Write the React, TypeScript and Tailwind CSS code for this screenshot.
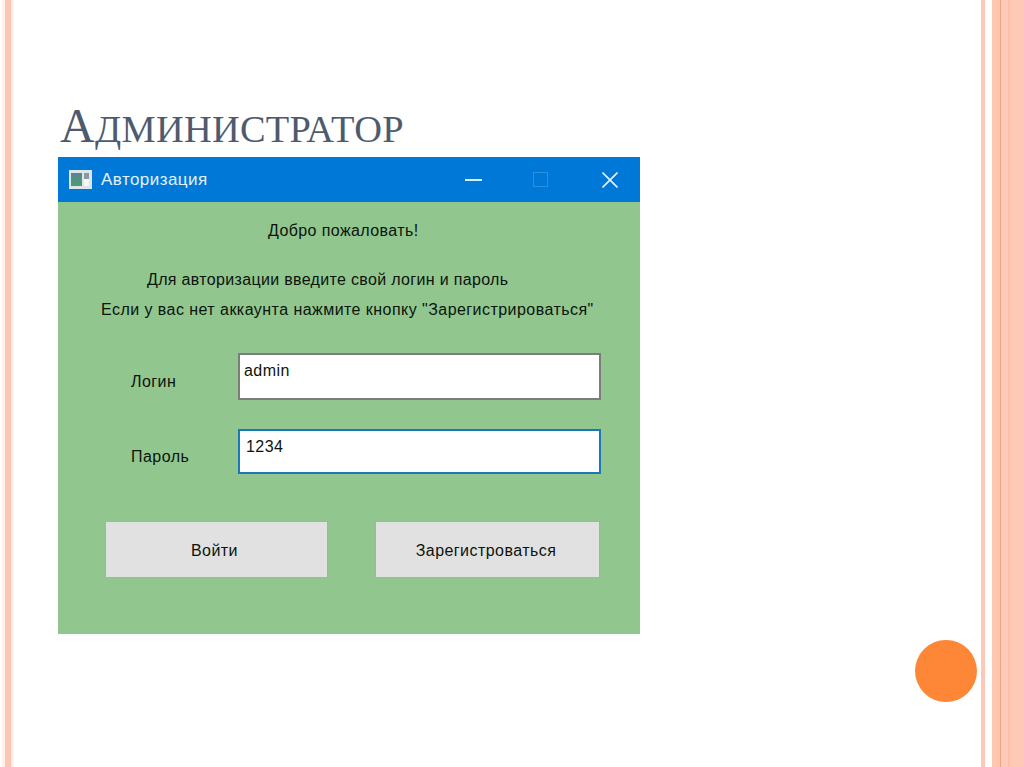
export default function App() {
  return (
    <div className="relative flex h-[767px] w-[1024px] overflow-hidden bg-white font-['Liberation_Sans',sans-serif]">
      {/* Left stripes */}
      <div className="flex w-[58px] shrink-0">
        <div className="ml-[2px] flex h-full w-[12px] justify-center bg-[#fdf1ec]">
          <div className="h-full w-[6px] bg-[#fec5b2]" />
        </div>
      </div>

      {/* Slide */}
      <div className="w-[582px] shrink-0">
        <h1 className="mt-[99px] ml-[2px] h-[58px] font-['Liberation_Serif',serif] text-[38.4px] leading-[54px] tracking-[0.3px] whitespace-nowrap text-[#4e5b6f] uppercase">
          <span className="text-[48px]">А</span>дминистратор
        </h1>

        {/* Login window */}
        <div className="flex h-[477px] flex-col bg-[#91c68f] text-[16px] tracking-[0.45px] text-[#0c140c]">
          <div className="flex h-[45px] shrink-0 items-center bg-[#0078d7] text-[#e4f1fb]">
            <svg width="23" height="19" viewBox="0 0 23 19" className="ml-[11px]">
              <defs>
                <linearGradient id="pane" x1="0" y1="0" x2="0" y2="1">
                  <stop offset="0" stopColor="#5f8296" />
                  <stop offset="1" stopColor="#47a06c" />
                </linearGradient>
              </defs>
              <rect width="23" height="19" fill="#dfe6ea" />
              <rect x="2" y="3" width="11" height="13" fill="url(#pane)" />
              <rect x="15" y="3" width="5" height="6" fill="#8a9aa5" />
              <rect x="15" y="9" width="5" height="7" fill="#f4f6f7" />
            </svg>
            <span className="ml-[9px] w-[107px] text-[17px] whitespace-nowrap">Авторизация</span>
            <svg width="17" height="2" viewBox="0 0 17 2" className="ml-[257px]">
              <rect width="17" height="2" fill="#dcecf8" />
            </svg>
            <svg width="15" height="15" viewBox="0 0 15 15" className="ml-[51px]">
              <rect x="0.5" y="0.5" width="14" height="14" fill="none" stroke="#2a90e0" />
            </svg>
            <svg width="16" height="16" viewBox="0 0 16 16" className="ml-[54px]">
              <path d="M0.5 0.5 L15.5 15.5 M15.5 0.5 L0.5 15.5" stroke="#e8f3fb" strokeWidth="1.6" fill="none" />
            </svg>
          </div>

          <p className="mt-[20px] ml-[210px] leading-[18px] tracking-[0.4px]">Добро пожаловать!</p>
          <p className="mt-[31px] ml-[89px] leading-[18px] tracking-[0.33px]">Для авторизации введите свой логин и пароль</p>
          <p className="mt-[12px] ml-[43px] leading-[18px]">Если у вас нет аккаунта нажмите кнопку "Зарегистрироваться"</p>

          <div className="mt-[34px] flex h-[47px] items-start">
            <span className="mt-[20px] ml-[73px] w-[107px] leading-[18px]">Логин</span>
            <div className="h-[47px] w-[363px] border-2 border-[#7d7d7d] bg-white pt-[7px] pl-[4px] leading-[18px]">admin</div>
          </div>
          <div className="mt-[29px] flex h-[45px] items-start">
            <span className="mt-[19px] ml-[73px] w-[107px] leading-[18px]">Пароль</span>
            <div className="h-[45px] w-[363px] border-2 border-[#1a78b8] bg-white pt-[7px] pl-[6px] leading-[18px]">1234</div>
          </div>

          <div className="mt-[47px] flex pl-[47px]">
            <button className="h-[57px] w-[223px] border border-[#adadad] bg-[#e1e1e1] pt-[2px] pr-[4px]">Войти</button>
            <button className="ml-[47px] h-[57px] w-[225px] border border-[#adadad] bg-[#e1e1e1] pt-[2px] pr-[3px]">Зарегистроваться</button>
          </div>
        </div>
      </div>

      {/* Right stripes */}
      <div className="ml-auto flex w-[43px] shrink-0">
        <div className="h-full w-[4px] bg-[#fdc8b8]" />
        <div className="ml-[7px] h-full w-[8px] bg-[#ffc6b2]" />
        <div className="h-full w-[1px] bg-[#f6a27a]" />
        <div className="h-full w-[7px] bg-[#ffcab9]" />
        <div className="h-full w-[2px] bg-[#ffc0aa]" />
        <div className="h-full w-[14px] bg-[#ffc9b8]" />
      </div>

      {/* Orange dot */}
      <div className="absolute top-[640px] left-[915px] h-[62px] w-[62px] rounded-full bg-[#fe8637]" />
    </div>
  );
}
